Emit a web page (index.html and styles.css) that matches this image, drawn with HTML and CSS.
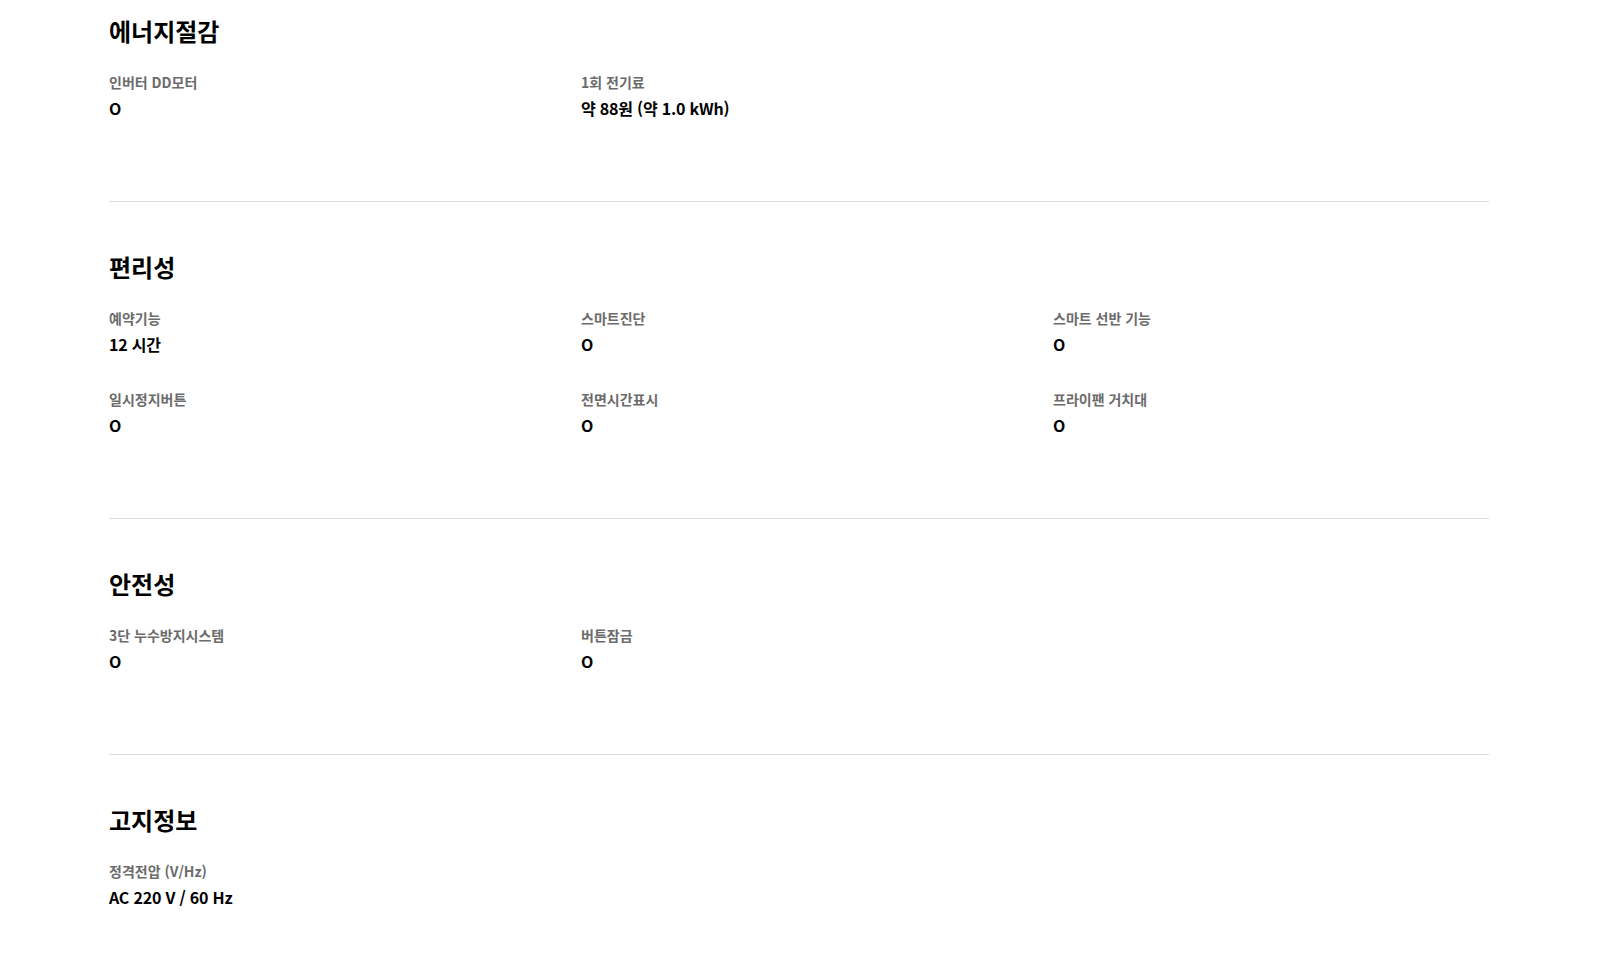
FILE: index.html
```html
<!DOCTYPE html>
<html lang="ko">
<head>
<meta charset="utf-8">
<title>사양</title>
<link rel="stylesheet" href="styles.css">
</head>
<body>
<main class="specs">
  <section class="spec-section">
    <h2 class="spec-title">에너지절감</h2>
    <div class="spec-grid">
      <div class="spec-item"><div class="spec-label">인버터 DD모터</div><div class="spec-value">O</div></div>
      <div class="spec-item"><div class="spec-label">1회 전기료</div><div class="spec-value">약 88원 (약 1.0 kWh)</div></div>
    </div>
  </section>
  <section class="spec-section">
    <h2 class="spec-title">편리성</h2>
    <div class="spec-grid">
      <div class="spec-item"><div class="spec-label">예약기능</div><div class="spec-value">12 시간</div></div>
      <div class="spec-item"><div class="spec-label">스마트진단</div><div class="spec-value">O</div></div>
      <div class="spec-item"><div class="spec-label">스마트 선반 기능</div><div class="spec-value">O</div></div>
      <div class="spec-item"><div class="spec-label">일시정지버튼</div><div class="spec-value">O</div></div>
      <div class="spec-item"><div class="spec-label">전면시간표시</div><div class="spec-value">O</div></div>
      <div class="spec-item"><div class="spec-label">프라이팬 거치대</div><div class="spec-value">O</div></div>
    </div>
  </section>
  <section class="spec-section">
    <h2 class="spec-title">안전성</h2>
    <div class="spec-grid">
      <div class="spec-item"><div class="spec-label">3단 누수방지시스템</div><div class="spec-value">O</div></div>
      <div class="spec-item"><div class="spec-label">버튼잠금</div><div class="spec-value">O</div></div>
    </div>
  </section>
  <section class="spec-section">
    <h2 class="spec-title">고지정보</h2>
    <div class="spec-grid">
      <div class="spec-item"><div class="spec-label">정격전압 (V/Hz)</div><div class="spec-value">AC 220 V / 60 Hz</div></div>
    </div>
  </section>
</main>
</body>
</html>
```

FILE: styles.css
```css
html, body {
  margin: 0;
  padding: 0;
  background: #fff;
}
body {
  font-family: "Noto Sans CJK KR", "Noto Sans", sans-serif;
  color: #000;
}
.specs {
  width: 1380px;
  margin-left: 109px;
}
.spec-section {
  padding: 49px 0 81px;
  border-bottom: 1px solid #ddd;
}
.spec-section:first-child {
  padding-top: 15px;
}
.spec-title {
  margin: 0 0 25px;
  font-size: 24px;
  line-height: 32px;
  font-weight: 700;
}
.spec-grid {
  display: grid;
  grid-template-columns: repeat(3, 436px);
  column-gap: 36px;
  row-gap: 33px;
}
.spec-label {
  font-size: 14px;
  line-height: 20px;
  font-weight: 700;
  color: #6b6b6b;
}
.spec-value {
  margin-top: 4px;
  font-size: 16px;
  line-height: 24px;
  font-weight: 700;
  letter-spacing: -0.2px;
  color: #000;
}
```
